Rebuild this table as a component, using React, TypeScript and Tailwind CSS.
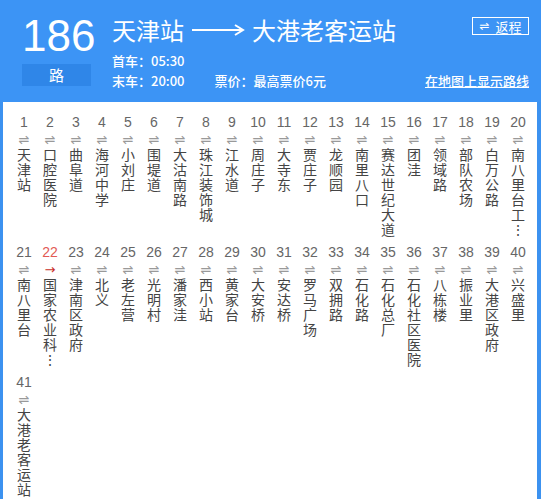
const stops = [
  "天津站", "口腔医院", "曲阜道", "海河中学", "小刘庄", "围堤道", "大沽南路", "珠江装饰城", "江水道", "周庄子",
  "大寺东", "贾庄子", "龙顺园", "南里八口", "赛达世纪大道", "团洼", "领域路", "部队农场", "白万公路", "南八里台工业园",
  "南八里台", "国家农业科技园", "津南区政府", "北义", "老左营", "光明村", "潘家洼", "西小站", "黄家台", "大安桥",
  "安达桥", "罗马广场", "双拥路", "石化路", "石化总厂", "石化社区医院", "八栋楼", "振业里", "大港区政府", "兴盛里",
  "大港老客运站",
];

const current = 22;

function Stop({ no, name }: { no: number; name: string }) {
  const active = no === current;
  const long = name.length > 6;
  const shown = long ? name.slice(0, 5) : name;

  return (
    <div className="w-[26px] flex flex-col items-center">
      <div
        className={`h-[20px] leading-[20px] text-[14px] font-['Liberation_Sans',sans-serif] ${
          active ? "text-[#e25a55]" : "text-[#666]"
        }`}
      >
        {no}
      </div>
      <div
        className={`h-[15px] leading-[15px] text-[13px] font-['DejaVu_Sans',sans-serif] ${
          active ? "text-[#c9302c]" : "text-[#999]"
        }`}
      >
        {active ? "→" : "⇌"}
      </div>
      <div className="w-[14px] break-all text-[14px] leading-[15px] text-[#444] font-['Noto_Sans_CJK_SC',sans-serif]">
        {shown}
        {long && <div className="text-center">⋮</div>}
      </div>
    </div>
  );
}

export default function App() {
  return (
    <div className="w-[541px] min-h-[499px] bg-white border-l-[3px] border-r-[4px] border-[#3c92f0] font-['Noto_Sans_CJK_SC',sans-serif]">
      {/* header */}
      <div className="-ml-[3px] -mr-[4px] h-[102px] bg-[#3c94f5] text-white flex pt-[14px] pl-[22px] pr-[12px]">
        <div className="w-[69px] flex flex-col">
          <div className="text-[44px] leading-none font-['Liberation_Sans',sans-serif] text-center">186</div>
          <div className="mt-[6px] h-[22px] bg-[#2f86e8] flex items-center justify-center text-[15px]">路</div>
        </div>

        <div className="flex-1 ml-[21px] flex flex-col">
          <div className="flex items-start justify-between">
            <div className="flex items-center text-[24px] leading-[30px] mt-[1px]">
              <span>天津站</span>
              <svg width="54" height="14" viewBox="0 0 54 14" className="mx-[7px]">
                <line x1="1" y1="7" x2="51" y2="7" stroke="white" strokeWidth="2" />
                <path d="M44 2 L52 7 L44 12" fill="none" stroke="white" strokeWidth="2" />
              </svg>
              <span>大港老客运站</span>
            </div>
            <div className="mt-[3px] h-[18px] w-[57px] border border-white flex items-center justify-center gap-[6px] text-[13px] leading-none">
              <span className="font-['DejaVu_Sans',sans-serif] text-[12px]">⇌</span>
              <span>返程</span>
            </div>
          </div>

          <div className="mt-[6px] flex items-end text-[13px] leading-[20px] font-medium">
            <div className="flex flex-col">
              <span>首车：05:30</span>
              <span>末车：20:00</span>
            </div>
            <span className="ml-[30px]">票价：最高票价6元</span>
            <span className="ml-auto underline">在地图上显示路线</span>
          </div>
        </div>
      </div>

      {/* stops */}
      <div className="flex flex-wrap gap-y-[5px] pt-[10px] pl-[8px]">
        {stops.map((s, i) => (
          <Stop key={i} no={i + 1} name={s} />
        ))}
      </div>
    </div>
  );
}
